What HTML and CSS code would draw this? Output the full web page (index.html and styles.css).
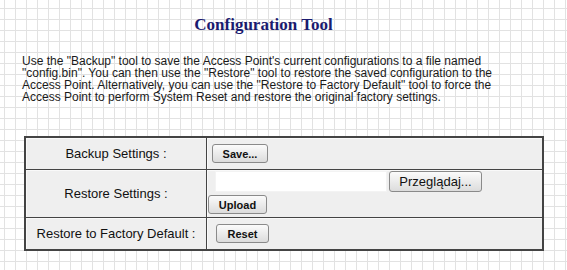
FILE: index.html
```html
<!DOCTYPE html>
<html>
<head>
<meta charset="utf-8">
<title>Configuration Tool</title>
<link rel="stylesheet" href="styles.css">
</head>
<body>
<div class="page">
  <h1 class="title">Configuration Tool</h1>
  <p class="intro">Use the "Backup" tool to save the Access Point's current configurations to a file named "config.bin". You can then use the "Restore" tool to restore the saved configuration to the Access Point. Alternatively, you can use the "Restore to Factory Default" tool to force the Access Point to perform System Reset and restore the original factory settings.</p>
  <table class="config">
    <tr class="row-short">
      <td class="label">Backup Settings :</td>
      <td class="field"><button class="btn btn-save" type="button">Save...</button></td>
    </tr>
    <tr class="row-tall">
      <td class="label">Restore Settings :</td>
      <td class="field field-top">
        <div class="file-row">
          <input class="file-text" type="text">
          <button class="btn-browse" type="button">Przeglądaj...</button>
        </div>
        <button class="btn btn-upload" type="button">Upload</button>
      </td>
    </tr>
    <tr class="row-short">
      <td class="label">Restore to Factory Default :</td>
      <td class="field"><button class="btn btn-reset" type="button">Reset</button></td>
    </tr>
  </table>
</div>
</body>
</html>
```
FILE: styles.css
```css
html, body {
  margin: 0;
  padding: 0;
}

body {
  width: 567px;
  height: 270px;
  overflow: hidden;
  background-color: #ffffff;
  background-image:
    linear-gradient(to right, #e2e2e2 1px, transparent 1px),
    linear-gradient(to bottom, #e2e2e2 1px, transparent 1px);
  background-size: 11px 11px;
  background-position: 4px 8px;
  font-family: "Liberation Sans", Arial, sans-serif;
  color: #111;
}

.page {
  padding-top: 15px;
}

.title {
  margin: 0 40px 0 0;
  font-family: "Liberation Serif", "Times New Roman", serif;
  font-weight: bold;
  font-size: 17px;
  line-height: 20px;
  color: #1b1b6f;
  text-align: center;
}

.intro {
  margin: 20px 0 0 22px;
  width: 505px;
  font-size: 12px;
  line-height: 12px;
  color: #1a1a1a;
}

.config {
  margin: 33px 0 0 24px;
  width: 520px;
  border-collapse: collapse;
  border: 2px solid #444;
  font-size: 13px;
}

.config td {
  border: 1px solid #444;
  background: #efefef;
  padding: 0;
  vertical-align: middle;
  box-shadow: inset 1px 1px 0 #f9f9f9;
}

.row-short td {
  height: 31px;
}

.row-tall td {
  height: 47px;
}

.label {
  width: 180px;
  text-align: center;
  color: #111;
}

.field-top {
  vertical-align: top !important;
}

.btn {
  display: block;
  height: 19px;
  padding: 0;
  border: 1px solid #8a8a8a;
  border-radius: 3px;
  background: linear-gradient(#fbfbfb, #dcdcdc);
  font-family: "Liberation Sans", Arial, sans-serif;
  font-weight: bold;
  font-size: 11px;
  color: #111;
}

.btn-save {
  width: 56px;
  margin-left: 5px;
}

.btn-reset {
  width: 53px;
  margin-left: 9px;
}

.btn-upload {
  width: 59px;
  margin: 3px 0 2px 1px;
}

.file-row {
  display: flex;
  gap: 2px;
  margin: 1px 0 0 8px;
}

.file-text {
  width: 172px;
  height: 21px;
  box-sizing: border-box;
  border: 1px solid #f3f3f3;
  background: #ffffff;
  padding: 0;
  margin: 0;
}

.btn-browse {
  width: 93px;
  height: 21px;
  padding: 0;
  border: 1px solid #8a8a8a;
  border-radius: 3px;
  background: linear-gradient(#fbfbfb, #dcdcdc);
  font-family: "Liberation Sans", Arial, sans-serif;
  font-size: 13px;
  color: #111;
}
```
